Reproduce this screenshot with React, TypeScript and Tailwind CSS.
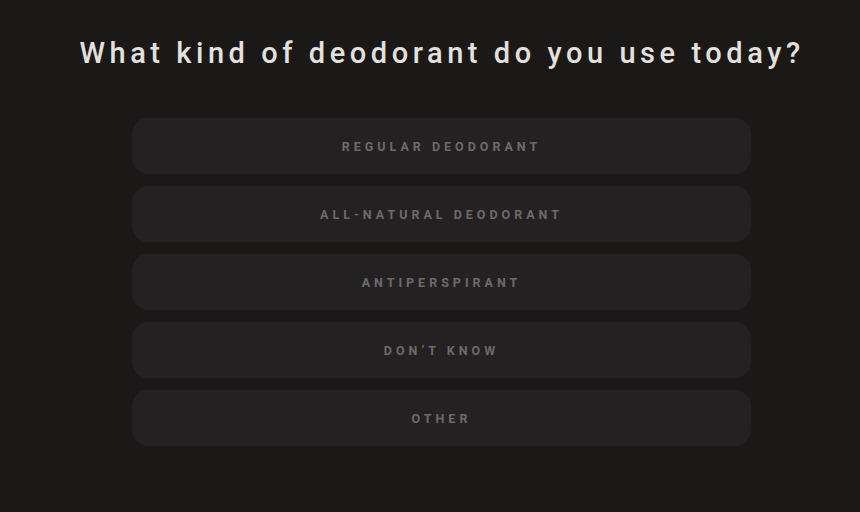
export default function App() {
  const options = ["Regular Deodorant", "All-Natural Deodorant", "Antiperspirant", "Don't Know", "Other"];
  return (
    <div className="w-[860px] h-[512px] bg-[#1a1918] flex flex-col items-center" style={{ fontFamily: "Roboto, 'Liberation Sans', sans-serif" }}>
      <h1 className="mt-[34px] ml-[24px] text-[29px] leading-[38px] font-medium tracking-[4.55px] text-[#e4e0dc]">
        What kind of deodorant do you use today?
      </h1>
      <div className="mt-[46px] self-start ml-[132px] w-[619px] flex flex-col gap-[12px]">
        {options.map((o) => (
          <button
            key={o}
            className="h-[56px] w-full rounded-[16px] bg-[#232122] text-[#6e6a6a] text-[12.5px] font-bold uppercase tracking-[4px] pt-[3px] flex items-center justify-center"
          >
            {o.replace("'", "’")}
          </button>
        ))}
      </div>
    </div>
  );
}
